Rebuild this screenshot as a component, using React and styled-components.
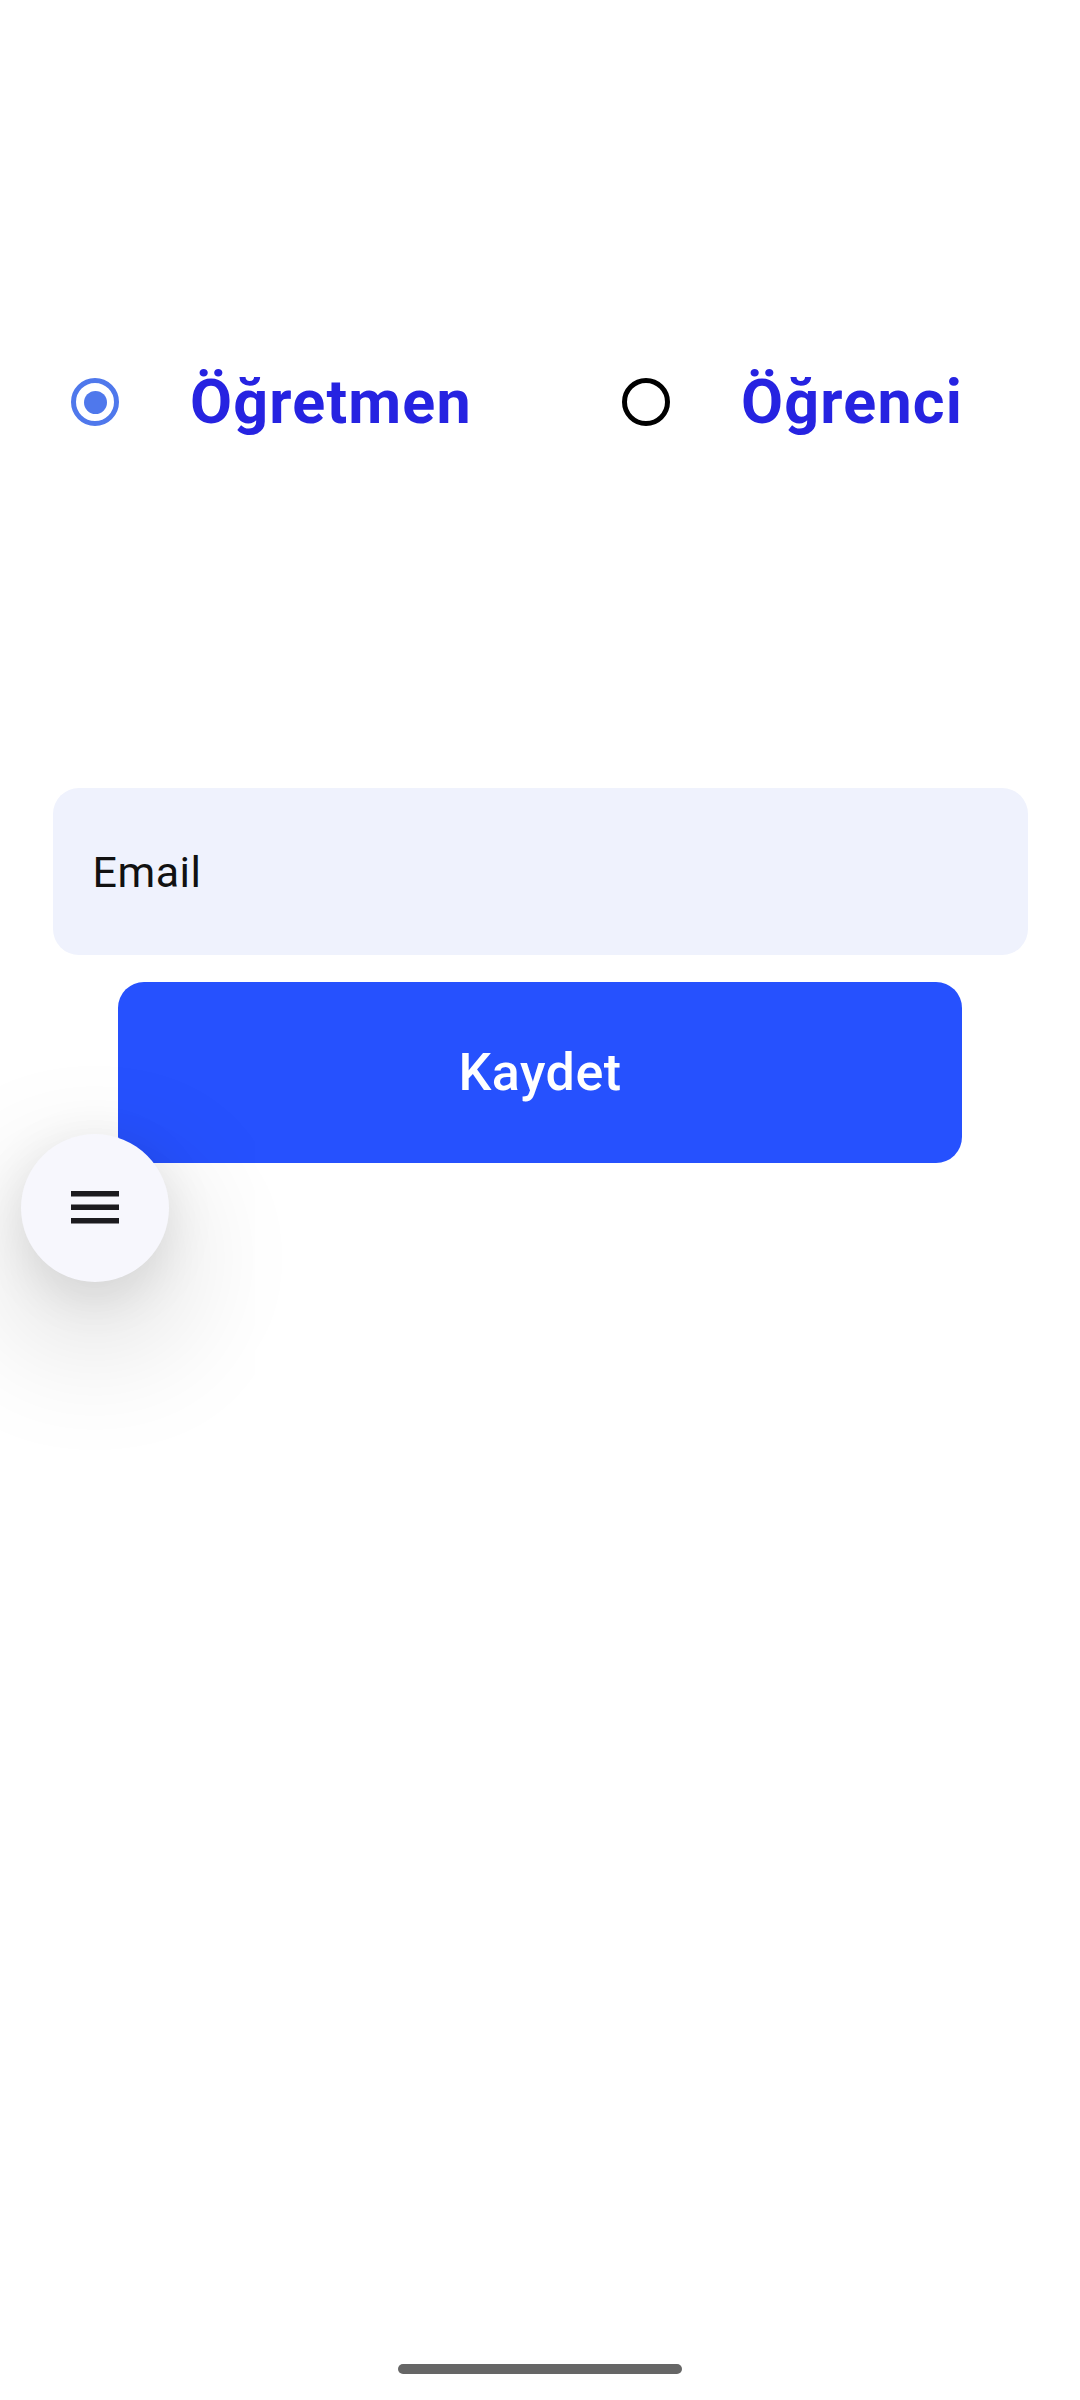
import React, { useState } from "react";
import styled, { createGlobalStyle } from "styled-components";

const Global = createGlobalStyle`
  html, body { margin: 0; padding: 0; background: #ffffff; }
  body { font-family: Roboto, "Noto Sans", "Liberation Sans", sans-serif; }
  * { box-sizing: border-box; }
`;

const Page = styled.div`
  position: relative;
  width: 1080px;
  height: 2400px;
  background: #ffffff;
  padding-top: 356px;
  display: flex;
  flex-direction: column;
  overflow: hidden;
`;

const RadioRow = styled.div`
  display: flex;
  align-items: center;
  height: 92px;
  padding-left: 71px;
`;

const Option = styled.label`
  display: flex;
  align-items: center;
  flex: none;
  width: 551px;
  gap: 71px;
  cursor: pointer;
`;

const Ring = styled.span`
  width: 48px;
  height: 48px;
  border-radius: 50%;
  border: 5px solid ${(p) => (p.$on ? "#4f78ec" : "#000000")};
  display: flex;
  align-items: center;
  justify-content: center;
  flex: none;
`;

const Dot = styled.span`
  width: 23px;
  height: 23px;
  border-radius: 50%;
  background: #4f78ec;
`;

const OptionLabel = styled.span`
  font-family: Roboto, sans-serif;
  font-weight: 700;
  font-size: 61px;
  letter-spacing: 1.2px;
  line-height: 1;
  color: #2623e1;
  white-space: nowrap;
`;

const Form = styled.div`
  margin-top: 340px;
  display: flex;
  flex-direction: column;
  align-items: center;
  gap: 27px;
`;

const Field = styled.div`
  width: 975px;
  height: 167px;
  background: #eff2fd;
  border-radius: 26px;
  display: flex;
  align-items: center;
  padding-left: 40px;
  font-family: Roboto, sans-serif;
  font-size: 43px;
  letter-spacing: 0.5px;
  color: #111111;
`;

const SaveButton = styled.button`
  width: 844px;
  height: 181px;
  border: none;
  border-radius: 26px;
  background: #2651fe;
  color: #ffffff;
  font-family: Roboto, sans-serif;
  font-weight: 500;
  font-size: 52px;
  letter-spacing: 0.5px;
  display: flex;
  align-items: center;
  justify-content: center;
  padding: 0;
`;

const Fab = styled.button`
  position: absolute;
  left: 21px;
  top: 1134px;
  width: 148px;
  height: 148px;
  border-radius: 50%;
  border: none;
  background: #f7f7fd;
  box-shadow: 0 50px 140px rgba(0, 0, 0, 0.2), 0 12px 50px rgba(0, 0, 0, 0.1);
  display: flex;
  align-items: center;
  justify-content: center;
  padding: 0;
`;

const HomeBar = styled.div`
  position: absolute;
  left: 398px;
  top: 2364px;
  width: 284px;
  height: 10px;
  border-radius: 5px;
  background: #666666;
`;

function MenuIcon() {
  return (
    <svg width="48" height="34" viewBox="0 0 48 34">
      <rect x="0" y="0" width="48" height="5.5" fill="#1c1b1f" />
      <rect x="0" y="13.5" width="48" height="5.5" fill="#1c1b1f" />
      <rect x="0" y="27" width="48" height="5.5" fill="#1c1b1f" />
    </svg>
  );
}

export default function App() {
  const [role, setRole] = useState("teacher");
  const options = [
    { id: "teacher", label: "Öğretmen" },
    { id: "student", label: "Öğrenci" },
  ];
  return (
    <>
      <Global />
      <Page>
        <RadioRow>
          {options.map((o) => (
            <Option key={o.id} onClick={() => setRole(o.id)}>
              <Ring $on={role === o.id}>{role === o.id && <Dot />}</Ring>
              <OptionLabel>{o.label}</OptionLabel>
            </Option>
          ))}
        </RadioRow>
        <Form>
          <Field>Email</Field>
          <SaveButton>Kaydet</SaveButton>
        </Form>
        <Fab aria-label="menu">
          <MenuIcon />
        </Fab>
        <HomeBar />
      </Page>
    </>
  );
}
